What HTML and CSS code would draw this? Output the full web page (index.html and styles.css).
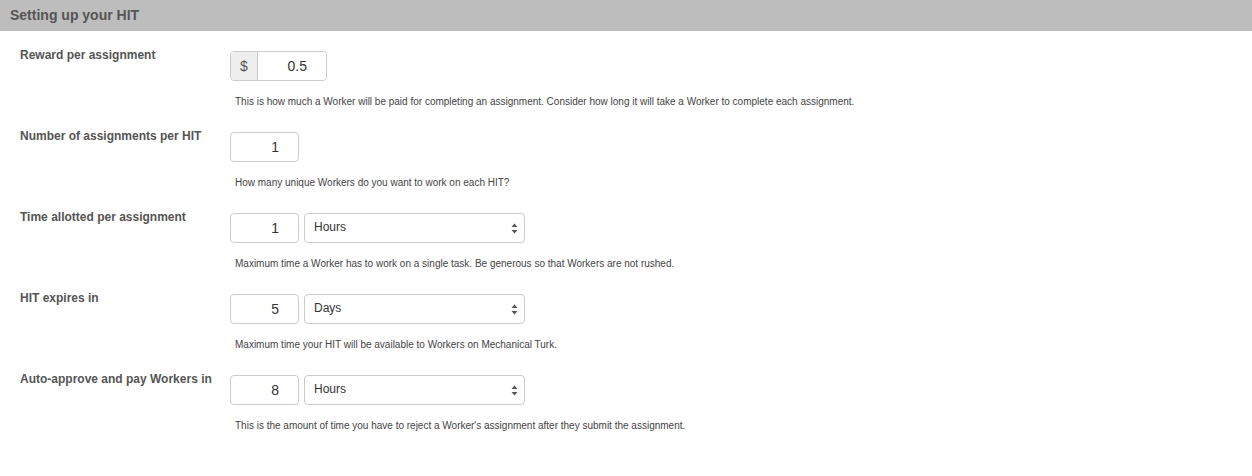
FILE: index.html
```html
<!DOCTYPE html>
<html>
<head>
<meta charset="utf-8">
<link rel="stylesheet" href="styles.css">
</head>
<body>
<div class="section-header">Setting up your HIT</div>
<div class="section-body">
  <div class="row">
    <div class="label">Reward per assignment</div>
    <div class="field">
      <div class="controls">
        <div class="input-group">
          <span class="addon">$</span>
          <input class="num num-reward" type="text" value="0.5">
        </div>
      </div>
      <div class="help">This is how much a Worker will be paid for completing an assignment. Consider how long it will take a Worker to complete each assignment.</div>
    </div>
  </div>
  <div class="row">
    <div class="label">Number of assignments per HIT</div>
    <div class="field">
      <div class="controls">
        <input class="num" type="text" value="1">
      </div>
      <div class="help">How many unique Workers do you want to work on each HIT?</div>
    </div>
  </div>
  <div class="row">
    <div class="label">Time allotted per assignment</div>
    <div class="field">
      <div class="controls">
        <input class="num" type="text" value="1">
        <div class="select-wrap">
          <select class="unit"><option>Hours</option></select>
          <svg class="arrows" width="7" height="11" viewBox="0 0 7 11"><path d="M3.5 0.5 L6.5 4 L0.5 4 Z M3.5 10.5 L6.5 7 L0.5 7 Z" fill="#555"/></svg>
        </div>
      </div>
      <div class="help">Maximum time a Worker has to work on a single task. Be generous so that Workers are not rushed.</div>
    </div>
  </div>
  <div class="row">
    <div class="label">HIT expires in</div>
    <div class="field">
      <div class="controls">
        <input class="num" type="text" value="5">
        <div class="select-wrap">
          <select class="unit"><option>Days</option></select>
          <svg class="arrows" width="7" height="11" viewBox="0 0 7 11"><path d="M3.5 0.5 L6.5 4 L0.5 4 Z M3.5 10.5 L6.5 7 L0.5 7 Z" fill="#555"/></svg>
        </div>
      </div>
      <div class="help">Maximum time your HIT will be available to Workers on Mechanical Turk.</div>
    </div>
  </div>
  <div class="row">
    <div class="label">Auto-approve and pay Workers in</div>
    <div class="field">
      <div class="controls">
        <input class="num" type="text" value="8">
        <div class="select-wrap">
          <select class="unit"><option>Hours</option></select>
          <svg class="arrows" width="7" height="11" viewBox="0 0 7 11"><path d="M3.5 0.5 L6.5 4 L0.5 4 Z M3.5 10.5 L6.5 7 L0.5 7 Z" fill="#555"/></svg>
        </div>
      </div>
      <div class="help">This is the amount of time you have to reject a Worker's assignment after they submit the assignment.</div>
    </div>
  </div>
</div>
</body>
</html>
```

FILE: styles.css
```css
* { box-sizing: border-box; }
html, body { margin: 0; padding: 0; background: #fff; }
body { font-family: "Liberation Sans", Arial, sans-serif; color: #333; }

.section-header {
  height: 31px;
  line-height: 31px;
  background: #bdbdbd;
  padding-left: 10px;
  font-size: 14px;
  font-weight: bold;
  color: #555;
}

.section-body {
  padding: 15px 0 0 20px;
}

.row {
  display: grid;
  grid-template-columns: 210px 1fr;
  padding-bottom: 18px;
}

.label {
  font-size: 12px;
  font-weight: bold;
  line-height: 16px;
  padding-top: 1px;
  color: #555;
}

.controls {
  display: flex;
  gap: 5px;
  margin-top: 5px;
  height: 30px;
}

.input-group {
  display: flex;
  width: 97px;
  height: 30px;
  border: 1px solid #ccc;
  border-radius: 4px;
  overflow: hidden;
}

.addon {
  flex: 0 0 27px;
  width: 27px;
  background: #eee;
  border-right: 1px solid #ccc;
  font-size: 14px;
  color: #555;
  display: flex;
  align-items: center;
  justify-content: center;
}

.num {
  width: 69px;
  height: 30px;
  border: 1px solid #ccc;
  border-radius: 4px;
  font-family: "Liberation Sans", Arial, sans-serif;
  font-size: 14px;
  color: #333;
  text-align: right;
  padding: 0 19px 0 0;
  margin: 0;
  outline: none;
  background: #fff;
}

.input-group .num-reward {
  flex: 1 1 0;
  min-width: 0;
  width: 0;
  height: 28px;
  border: none;
  border-radius: 0;
}

.select-wrap {
  position: relative;
  width: 221px;
  height: 30px;
}

.unit {
  appearance: none;
  -webkit-appearance: none;
  width: 100%;
  height: 30px;
  border: 1px solid #ccc;
  border-radius: 4px;
  background: #fff;
  font-family: "Liberation Sans", Arial, sans-serif;
  font-size: 12px;
  color: #333;
  padding: 0 0 3px 9px;
  margin: 0;
  outline: none;
}

.arrows {
  position: absolute;
  right: 7px;
  top: 10px;
}

.help {
  margin-top: 14px;
  padding-left: 5px;
  font-size: 10px;
  line-height: 14px;
  color: #444;
}
```
